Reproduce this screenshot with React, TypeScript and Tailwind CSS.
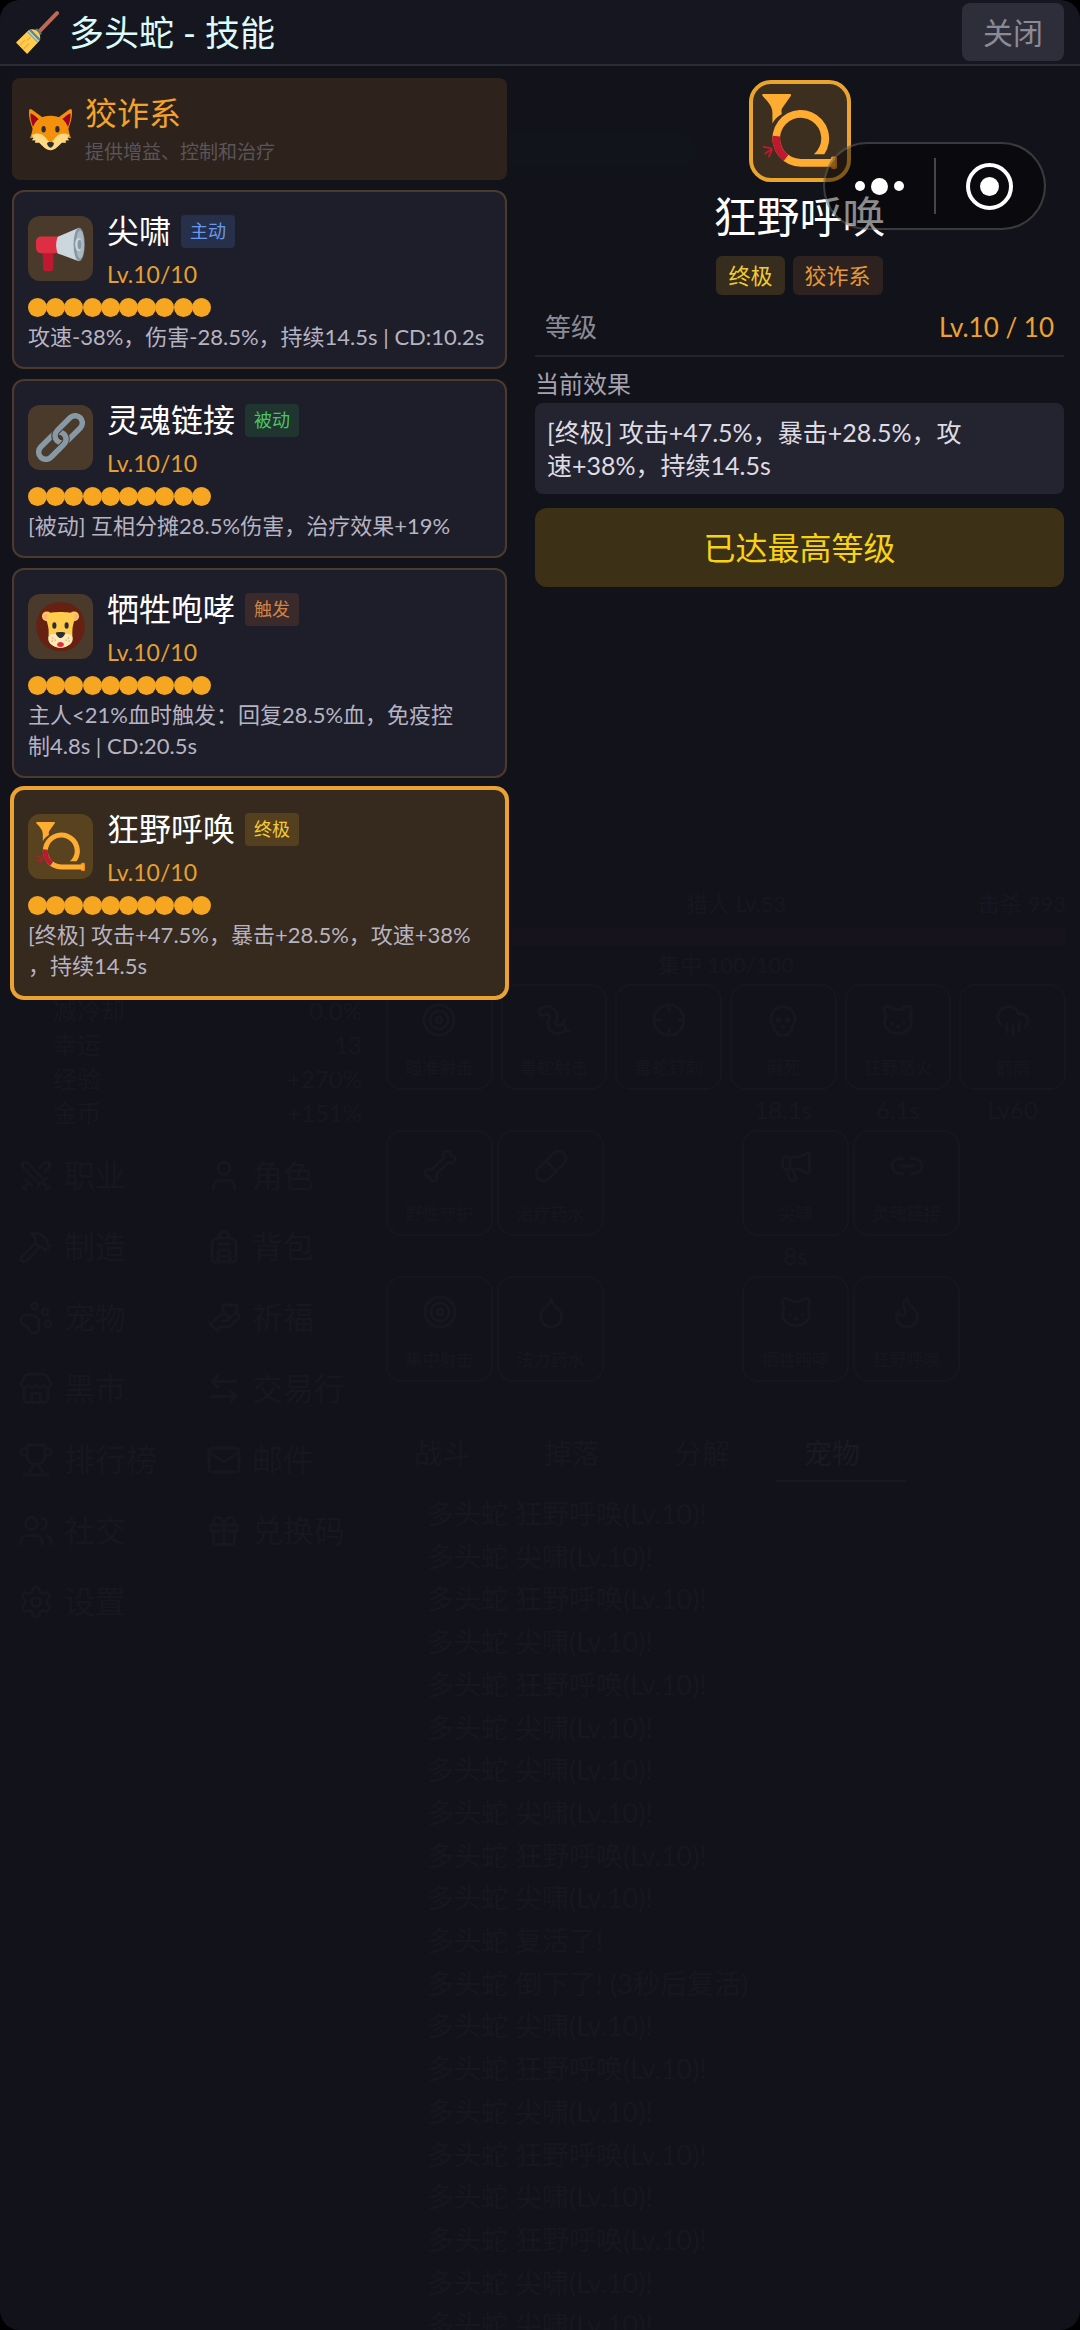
import type { ReactNode } from "react";
import {
  ArrowLeftRight,
  Backpack,
  Bone,
  Cat,
  CloudRain,
  Crosshair,
  Droplet,
  Flame,
  Gift,
  Hammer,
  HandHeart,
  Link2,
  Mail,
  Megaphone as MegaphoneOutline,
  PawPrint,
  Pill,
  Settings,
  Skull,
  Store,
  Swords,
  Target,
  Trophy,
  User,
  Users,
  Worm,
  type LucideIcon,
} from "lucide-react";

function Svg({ children, className, label }: { children: ReactNode; className: string; label: string }) {
  return (
    <svg viewBox="0 0 36 36" role="img" aria-label={label} className={className}>
      {children}
    </svg>
  );
}

function Broom({ className }: { className: string }) {
  return (
    <Svg className={className} label="扫帚">
      <path d="M34.3 1.8 20 16.6" stroke="#bf6952" strokeWidth="3.4" strokeLinecap="round" />
      <path d="m17.5 14.4 4.2 4.3-2.6 2.7-4.4-4.4z" fill="#66757f" />
      <path d="M10.5 16.2c2.6-1.6 5.6-1 7.6 1.1 2.2 2.2 2.9 5.2 1.4 7.9L9.3 36 0 26.4z" fill="#ffcc4d" />
      <path d="m3.4 28.4 4-4M6.6 31.6l4-4M9.4 24.6l2.6-2.6" stroke="#f4a93a" strokeWidth="1" strokeLinecap="round" />
      <path d="m11.6 15.6 8.3 8.6" stroke="#3b88c3" strokeWidth="1.8" fill="none" />
      <path d="m9.7 17.4 8.4 8.6" stroke="#5dadec" strokeWidth="1" fill="none" />
    </Svg>
  );
}

function Fox({ className }: { className: string }) {
  return (
    <Svg className={className} label="狐狸">
      <path d="M1 2.2c.3-.8 1-.7 2-.2l9 6.500-7.800 10C1.800 13 .2 6.500 1 2.200z" fill="#f4900c" />
      <path d="M35 2.200c-.3-.8-1-.7-2-.2l-9 6.500 7.800 10c2.400-5.500 4-12 3.200-16.300z" fill="#f4900c" />
      <path d="M2 5c2.500 1 5.600 3.400 7.200 5.600L4 16C2.500 12 1.700 8 2 5z" fill="#a0041e" />
      <path d="M34 5c-2.500 1-5.600 3.400-7.200 5.600L32 16c1.500-4 2.300-8 2-11z" fill="#a0041e" />
      <path d="M18 7c7 0 12.500 3 14.300 10.500.7 3 1 5 2.200 7.500-2-.3-3.500 0-5 1.500L18 34 6.500 26.500C5 25 3.500 24.700 1.500 25c1.200-2.500 1.500-4.500 2.200-7.500C5.500 10 11 7 18 7z" fill="#f4900c" />
      <path d="M3 22.500c3.500-2 7-1.500 9.500.5 2.700 2 4 5.500 5.500 5.500s2.800-3.500 5.500-5.500c2.500-2 6-2.500 9.500-.5L31.500 25l1.500 1.500-3 .3.500 1.700-3.500 0C24.500 31 21.500 34.500 18 34.500S11.500 31 9 28.500l-3.500 0 .5-1.700-3-.3L4.500 25z" fill="#ffd983" />
      <ellipse cx="12.500" cy="17.800" rx="1.700" ry="2.600" fill="#292f33" />
      <ellipse cx="23.500" cy="17.800" rx="1.700" ry="2.600" fill="#292f33" />
      <path d="M15.300 29.200c0-1.500 5.400-1.500 5.400 0 0 1.600-1.600 3.300-2.700 3.300s-2.700-1.700-2.700-3.300z" fill="#292f33" />
    </Svg>
  );
}

function Megaphone({ className }: { className: string }) {
  return (
    <Svg className={className} label="喇叭">
      <path d="M4.800 20h8v12.500c0 1.300-1 2.200-2.300 2.200H7.300c-1.300 0-2-.9-2-2.200z" fill="#be1931" />
      <path d="M17 9.200H3.500C1.500 9.200 0 11 0 13v4.500c0 2.200 1.500 4 3.500 4H17z" fill="#dd2e44" />
      <path d="M16 9.300 31.500 2.700v24.600L16 21.600c-1.600-3.800-1.600-8.500 0-12.300z" fill="#ccd6dd" />
      <ellipse cx="31.700" cy="15" rx="4.100" ry="12.300" fill="#8899a6" />
      <ellipse cx="32.400" cy="15" rx="2.900" ry="10.300" fill="#aab8c2" />
      <ellipse cx="31.300" cy="15" rx="2.500" ry="4.800" fill="#ccd6dd" />
      <ellipse cx="32" cy="15" rx="1.500" ry="3.500" fill="#8899a6" />
    </Svg>
  );
}

function Chain({ className }: { className: string }) {
  return (
    <Svg className={className} label="链接">
      <g transform="rotate(-45 18 18)" fill="none">
        <rect x="-2.500" y="12.700" width="24" height="10.600" rx="5.300" stroke="#8899a6" strokeWidth="4" />
        <rect x="14.500" y="12.700" width="24" height="10.600" rx="5.300" stroke="#493a2b" strokeWidth="5.400" />
        <rect x="14.500" y="12.700" width="24" height="10.600" rx="5.300" stroke="#8899a6" strokeWidth="4" />
        <path d="M11 23.300h5.200a5.300 5.300 0 0 0 5.300-5.300" stroke="#493a2b" strokeWidth="5.400" />
        <path d="M10.500 23.300h5.700a5.300 5.300 0 0 0 5.300-6" stroke="#8899a6" strokeWidth="4" />
      </g>
    </Svg>
  );
}

function Lion({ className }: { className: string }) {
  return (
    <Svg className={className} label="狮子">
      <path d="M18 .2c4 0 7.500.6 10.300 2.800C33 6 35.800 11.500 35.800 18c0 5-2 9.500-5.200 13-3.200 3.300-8 5.300-12.600 5.300S8.600 34.300 5.400 31C2.200 27.500.2 23 .2 18 .2 11.500 3 6 7.700 3 10.500.8 14 .2 18 .2z" fill="#662113" />
      <circle cx="8" cy="10.500" r="3.600" fill="#ffcc4d" />
      <circle cx="28" cy="10.500" r="3.600" fill="#ffcc4d" />
      <circle cx="7.700" cy="10.800" r="2.200" fill="#ffac8a" />
      <circle cx="28.300" cy="10.800" r="2.200" fill="#ffac8a" />
      <path d="M18 7.300c4.500 0 8.500.5 10 1.500.8 5-.8 7-1.200 11-.3 3.500.4 6.200-1 9-1.400 3-4.500 5-7.800 5s-6.400-2-7.800-5c-1.400-2.800-.7-5.500-1-9-.4-4-2-6-1.200-11 1.500-1 5.500-1.500 10-1.500z" fill="#ffcc4d" />
      <path d="M18 24c3 0 8.500-2 9 2.500.3 3.200-2.500 5.800-5.500 6.300h-7c-3-.5-5.800-3.100-5.500-6.300.5-4.500 6-2.500 9-2.500z" fill="#ffe8b6" />
      <ellipse cx="13.500" cy="17.300" rx="1.500" ry="2.400" fill="#292f33" />
      <ellipse cx="22.500" cy="17.300" rx="1.500" ry="2.400" fill="#292f33" />
      <path d="M14.600 22.700c0-1 6.800-1 6.800 0 0 1.600-2.200 3.800-3.400 3.800s-3.400-2.200-3.400-3.800z" fill="#292f33" />
      <path d="M18 29.300c1.500 0 2.500 1 2.500 2S19.500 33 18 33s-2.500-.7-2.500-1.700 1-2 2.500-2z" fill="#dd2e44" />
      <path d="M12.300 26.500h.1M11.800 28.700h.1M14 28h.1M23.700 26.500h.1M24.200 28.700h.1M22 28h.1" stroke="#c98a3c" strokeWidth=".9" strokeLinecap="round" />
    </Svg>
  );
}

function Horn({ className }: { className: string }) {
  return (
    <Svg className={className} label="号角">
      <path d="M.5 0h13c.5 0 .6.6.3.900L9.900 6.500C9 7.800 9.500 8.500 9.500 9.600 7.200 11 5.800 12.500 5 14.200V9C5 6 3 4 .3 1 0 .6.100 0 .5 0z" fill="#ffac33" />
      <path d="M29.900 28.900A13.600 13.600 0 1 0 18.600 34.900H34V31.200H18.600A9.900 9.900 0 1 1 24.900 28.900z" fill="#ffac33" />
      <path d="M6.900 20.200a11.750 11.750 0 0 0 4.600 10.500" stroke="#be1931" strokeWidth="3.700" fill="none" />
      <path d="m4.300 26-3.600-.6M4.600 26.400 1.600 28.600M4.800 26.800l-1.500 3.200" stroke="#be1931" strokeWidth=".9" strokeLinecap="round" />
      <rect x="33" y="30" width="3" height="6" rx="1" fill="#f4900c" />
      <path d="M33 31.200h2v3.700h-2z" fill="#ffac33" />
    </Svg>
  );
}

type Skill = {
  name: string;
  tag: string;
  tagClass: string;
  icon: ReactNode;
  lines: string[];
  selected?: boolean;
};

const iconSize = "size-[49px]";

const skills: Skill[] = [
  {
    name: "尖啸",
    tag: "主动",
    tagClass: "bg-[#26304a] text-[#6a98ee]",
    icon: <Megaphone className={iconSize} />,
    lines: ["攻速-38%，伤害-28.5%，持续14.5s | CD:10.2s"],
  },
  {
    name: "灵魂链接",
    tag: "被动",
    tagClass: "bg-[#20352f] text-[#4cc466]",
    icon: <Chain className={iconSize} />,
    lines: ["[被动] 互相分摊28.5%伤害，治疗效果+19%"],
  },
  {
    name: "牺牲咆哮",
    tag: "触发",
    tagClass: "bg-[#3a2a2b] text-[#cf8446]",
    icon: <Lion className={iconSize} />,
    lines: ["主人<21%血时触发：回复28.5%血，免疫控", "制4.8s | CD:20.5s"],
  },
  {
    name: "狂野呼唤",
    tag: "终极",
    tagClass: "bg-[#54401f] text-[#f2cb33]",
    icon: <Horn className={iconSize} />,
    lines: ["[终极] 攻击+47.5%，暴击+28.5%，攻速+38%", "，持续14.5s"],
    selected: true,
  },
];

function SkillCard({ skill }: { skill: Skill }) {
  return (
    <button
      type="button"
      aria-pressed={!!skill.selected}
      className={
        skill.selected
          ? "block w-full rounded-xl border-2 border-[#eba233] bg-[#36291e] px-3.5 pt-4 pb-[15px] text-left ring-2 ring-[#eba233]"
          : "block w-full rounded-xl border-2 border-[#4b3b2d] bg-[#1e1e2a] px-3.5 pt-4 pb-[15px] text-left"
      }
    >
      <span className="flex items-start gap-3.5">
        <span
          className={
            skill.selected
              ? "mt-2 flex size-[65px] shrink-0 items-center justify-center rounded-xl bg-[#58421f]"
              : "mt-2 flex size-[65px] shrink-0 items-center justify-center rounded-xl bg-[#493a2b]"
          }
        >
          {skill.icon}
        </span>
        <span className="block">
          <span className="flex h-[46px] items-center gap-2.5">
            <span className="text-[32px] leading-[46px] text-white">{skill.name}</span>
            <span className={`rounded px-[9px] text-[18px] leading-[33px] ${skill.tagClass}`}>{skill.tag}</span>
          </span>
          <span className="block text-[23px] leading-10 text-[#e5a030]">Lv.10/10</span>
        </span>
      </span>
      <span className="mt-1 grid w-[182px] grid-cols-10" role="img" aria-label="10 / 10">
        {Array.from({ length: 10 }, (_, i) => (
          <span key={i} className="size-[19px] rounded-full bg-[#f7a622]" />
        ))}
      </span>
      <span className="mt-1 block text-[22px] leading-[31px] whitespace-nowrap text-[#b6b4c2]">
        {skill.lines.map((line) => (
          <span key={line} className="block">
            {line}
          </span>
        ))}
      </span>
    </button>
  );
}

const stats = [
  ["减冷却", "0.0%"],
  ["幸运", "13"],
  ["经验", "+270%"],
  ["金币", "+151%"],
];

const menu: [string, LucideIcon][] = [
  ["职业", Swords],
  ["角色", User],
  ["制造", Hammer],
  ["背包", Backpack],
  ["宠物", PawPrint],
  ["祈福", HandHeart],
  ["黑市", Store],
  ["交易行", ArrowLeftRight],
  ["排行榜", Trophy],
  ["邮件", Mail],
  ["社交", Users],
  ["兑换码", Gift],
  ["设置", Settings],
];

const wild = "狂野呼唤(Lv.10)!";
const howl = "尖啸(Lv.10)!";
const log = [wild, howl, wild, howl, wild, howl, howl, howl, wild, howl, "复活了!", "倒下了! (3秒后复活)", howl, wild, howl, wild, howl, wild, howl, howl];

function Slot({ name, icon: Icon, note }: { name: string; icon: LucideIcon; note?: string }) {
  return (
    <div className="text-center">
      <div className="flex h-[106px] flex-col items-center justify-between rounded-2xl border-2 border-[#16161f] pt-4 pb-2 text-[17px]">
        <Icon className="size-9" />
        {name}
      </div>
      <div className="h-10 text-[24px] leading-10">{note}</div>
    </div>
  );
}

function DimmedGame() {
  return (
    <div aria-hidden="true" className="absolute inset-0 flex gap-6 overflow-hidden text-[#171720]">
      <div className="w-[362px] shrink-0 pt-[994px] pl-[18px]">
        {stats.map(([k, v]) => (
          <div key={k} className="flex justify-between pl-[35px] text-[24px] leading-[34px]">
            <span>{k}</span>
            <span>{v}</span>
          </div>
        ))}
        <div className="mt-[10px] grid grid-cols-[188px_1fr] text-[31px] leading-[71px]">
          {menu.map(([name, Icon]) => (
            <span key={name} className="flex items-center gap-2.5 whitespace-nowrap">
              <Icon className="size-9" />
              {name}
            </span>
          ))}
        </div>
      </div>
      <div className="min-w-0 flex-1 pt-[134px] pr-3.5">
        <div className="h-8 w-[310px] rounded-xl bg-[#11151b]" />
        <div className="mt-[718px] flex justify-between pl-[300px] text-[22px] leading-10">
          <span>猎人 Lv.53</span>
          <span>击杀 993</span>
        </div>
        <div className="mt-1 h-[18px] rounded bg-[#16131d]" />
        <div className="text-center text-[22px] leading-[38px]">集中 100/100</div>
        <div className="grid grid-cols-6 gap-2">
          <Slot icon={Target} name="瞄准射击" />
          <Slot icon={Worm} name="毒蛇射击" />
          <Slot icon={Crosshair} name="毒蛇钉刺" />
          <Slot icon={Skull} name="假死" note="18.1s" />
          <Slot icon={Cat} name="狂野怒火" note="6.1s" />
          <Slot icon={CloudRain} name="箭雨" note="Lv60" />
        </div>
        <div className="flex justify-between pr-[106px]">
          <div className="grid w-[218px] grid-cols-2 gap-x-1">
            <Slot icon={Bone} name="野性守护" />
            <Slot icon={Pill} name="治疗药水" />
            <Slot icon={Target} name="集中射击" />
            <Slot icon={Droplet} name="法力药水" />
          </div>
          <div className="grid w-[218px] grid-cols-2 gap-x-1">
            <Slot icon={MegaphoneOutline} name="尖啸" note="8s" />
            <Slot icon={Link2} name="灵魂链接" />
            <Slot icon={Cat} name="牺牲咆哮" />
            <Slot icon={Flame} name="狂野呼唤" />
          </div>
        </div>
        <div className="flex pt-1 text-[28px] leading-[54px]">
          <span className="w-[130px] pl-7">战斗</span>
          <span className="w-[130px] pl-7">掉落</span>
          <span className="w-[130px] pl-7">分解</span>
          <span className="w-[130px] border-b-2 border-[#181821] pl-7 text-[#1a1a24]">宠物</span>
        </div>
        <div className="mt-3 grid h-[854px] auto-rows-fr pl-[41px] text-[27px] leading-10">
          {log.map((l, i) => (
            <div key={i}>多头蛇 {l}</div>
          ))}
        </div>
      </div>
    </div>
  );
}

export default function App() {
  return (
    <div className="bg-black">
      <main className="relative min-h-screen overflow-hidden rounded-[20px] bg-[#12121a] font-['Lato','Noto_Sans_CJK_SC',sans-serif]">
        <DimmedGame />
        <div className="relative">
          <header className="flex h-[66px] items-center justify-between border-b-2 border-[#2b2b35] bg-[#161620] px-4">
            <h1 className="flex items-center gap-2.5 text-[35px] leading-none font-normal text-[#dcfbfa]">
              <Broom className="size-[43px]" />
              多头蛇 - 技能
            </h1>
            <button type="button" className="rounded-lg bg-[#2e2e3b] px-[21px] text-[30px] leading-[58px] text-[#8b8a97]">
              关闭
            </button>
          </header>

          <div className="grid grid-cols-[495fr_529fr] gap-7 pr-4 pl-3">
            <section className="flex flex-col gap-2.5 pt-3">
              <div className="flex items-center gap-3 rounded-lg bg-[#2d231c] px-4 py-3">
                <Fox className="size-[45px]" />
                <div>
                  <h2 className="text-[32px] leading-[46px] font-normal text-[#f3a32b]">狡诈系</h2>
                  <p className="text-[19px] leading-8 text-[#5b555a]">提供增益、控制和治疗</p>
                </div>
              </div>
              {skills.map((s) => (
                <SkillCard key={s.name} skill={s} />
              ))}
            </section>

            <section className="pt-3.5">
              <div className="flex flex-col items-center">
                <div className="flex size-[102px] items-center justify-center rounded-[22px] border-4 border-[#eba52f] bg-[#3d2f1f]">
                  <Horn className="size-[75px]" />
                </div>
                <h2 className="mt-1 text-[43px] leading-[62px] font-normal text-white">狂野呼唤</h2>
                <div className="mt-2 flex gap-2 text-[22px] leading-[39px]">
                  <span className="rounded-md bg-[#362d1e] px-3 text-[#f2cb33]">终极</span>
                  <span className="rounded-md bg-[#2d221f] px-3 text-[#e59a36]">狡诈系</span>
                </div>
              </div>
              <div className="mt-3 flex justify-between border-b-2 border-[#24242e] px-2.5 pb-2 text-[26px] leading-10">
                <span className="text-[#8b8a97]">等级</span>
                <span className="text-[#eba233]">Lv.10 / 10</span>
              </div>
              <h3 className="mt-2 text-[24px] leading-[38px] font-normal text-[#a3a2ae]">当前效果</h3>
              <p className="rounded-lg bg-[#242430] px-3 pt-[13px] pb-3 text-[25px] leading-[33px] whitespace-nowrap text-[#dddce4]">
                [终极] 攻击+47.5%，暴击+28.5%，攻
                <br />
                速+38%，持续14.5s
              </p>
              <button type="button" className="mt-3.5 w-full rounded-xl bg-[#3c3016] text-[32px] leading-[79px] text-[#f8d313]">
                已达最高等级
              </button>
            </section>
          </div>
        </div>

        <div className="absolute top-[142px] right-[34px] flex h-[88px] w-[223px] items-center rounded-full border-2 border-white/20 bg-black/45">
          <button type="button" aria-label="更多" className="flex flex-1 items-center justify-center gap-1.5">
            <span className="size-2.5 rounded-full bg-white" />
            <span className="size-[17px] rounded-full bg-white" />
            <span className="size-2.5 rounded-full bg-white" />
          </button>
          <span className="h-14 w-0.5 bg-white/25" />
          <button type="button" aria-label="关闭小程序" className="flex flex-1 items-center justify-center">
            <span className="flex size-[47px] items-center justify-center rounded-full border-4 border-white">
              <span className="size-[19px] rounded-full bg-white" />
            </span>
          </button>
        </div>
      </main>
    </div>
  );
}
